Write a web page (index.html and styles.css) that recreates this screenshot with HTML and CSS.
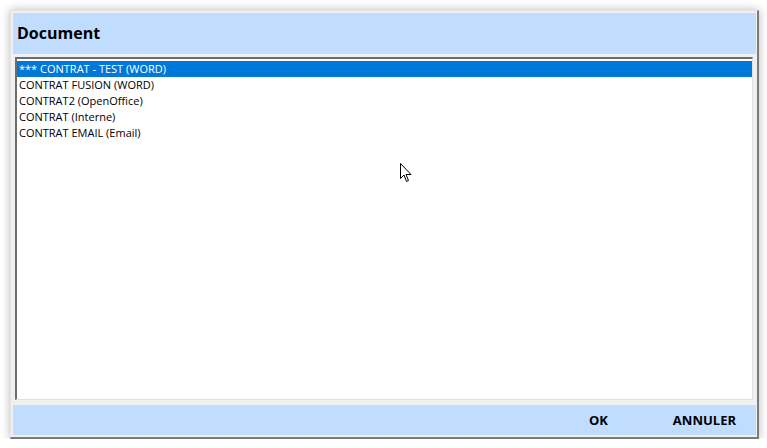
FILE: index.html
```html
<!DOCTYPE html>
<html lang="fr">
<head>
    <meta charset="UTF-8">
    <title>Document</title>
    <link rel="stylesheet" href="styles.css">
</head>
<body>
    <div class="dialog">
        <div class="dialog-header">Document</div>
        <div class="doc-list">
            <div class="doc-item selected">*** CONTRAT - TEST (WORD)</div>
            <div class="doc-item">CONTRAT FUSION (WORD)</div>
            <div class="doc-item">CONTRAT2 (OpenOffice)</div>
            <div class="doc-item">CONTRAT (Interne)</div>
            <div class="doc-item">CONTRAT EMAIL (Email)</div>
        </div>
        <div class="dialog-footer">
            <button class="btn">OK</button>
            <button class="btn">ANNULER</button>
        </div>
    </div>
    <svg class="cursor" width="13" height="20" viewBox="0 0 13 20">
        <path d="M0.5 0.5 L0.5 15.5 L4 12 L6.5 18.5 L8.5 17.5 L6 11.5 L11 11.5 Z" fill="#fff" stroke="#000" stroke-width="1"/>
    </svg>
</body>
</html>
```

FILE: styles.css
```css
body {
    margin: 0;
    background: #fff;
    font-family: "Open Sans", "Noto Sans", sans-serif;
}
.dialog {
    box-sizing: border-box;
    width: 749px;
    height: 429px;
    margin: 10px 0 0 10px;
    background: #f0f0f0;
    border-top: 1px solid #e3e3e3;
    border-left: 1px solid #e3e3e3;
    border-right: 2px solid #7a7a7a;
    border-bottom: 2px solid #7a7a7a;
    padding: 2px 1px 2px 2px;
    box-shadow: 0 0 9px rgba(0, 0, 0, 0.28);
    display: flex;
    flex-direction: column;
}
.dialog-header {
    height: 41px;
    background: #c0dcff;
    font-weight: bold;
    font-size: 16px;
    padding-left: 4px;
    line-height: 41px;
    color: #000;
}
.doc-list {
    flex: 1;
    margin: 3px 3px 5px 2px;
    background: #fff;
    border-top: 2px solid #6d6d6d;
    border-left: 2px solid #6d6d6d;
    border-right: 1px solid #e0e0e0;
    border-bottom: 1px solid #e0e0e0;
    padding-top: 2px;
}
.doc-item {
    height: 16px;
    line-height: 16px;
    font-size: 11px;
    padding-left: 2px;
    color: #000;
    white-space: nowrap;
}
.doc-item.selected {
    background: #0078d7;
    color: #fff;
}
.dialog-footer {
    height: 30px;
    background: #c0dcff;
    display: flex;
    justify-content: flex-end;
    align-items: center;
    padding-right: 20px;
}
.btn {
    border: none;
    background: none;
    font-family: inherit;
    font-weight: bold;
    font-size: 13px;
    color: #000;
    padding: 0;
    margin-left: 65px;
}
.cursor {
    position: absolute;
    left: 400px;
    top: 163px;
}
```
